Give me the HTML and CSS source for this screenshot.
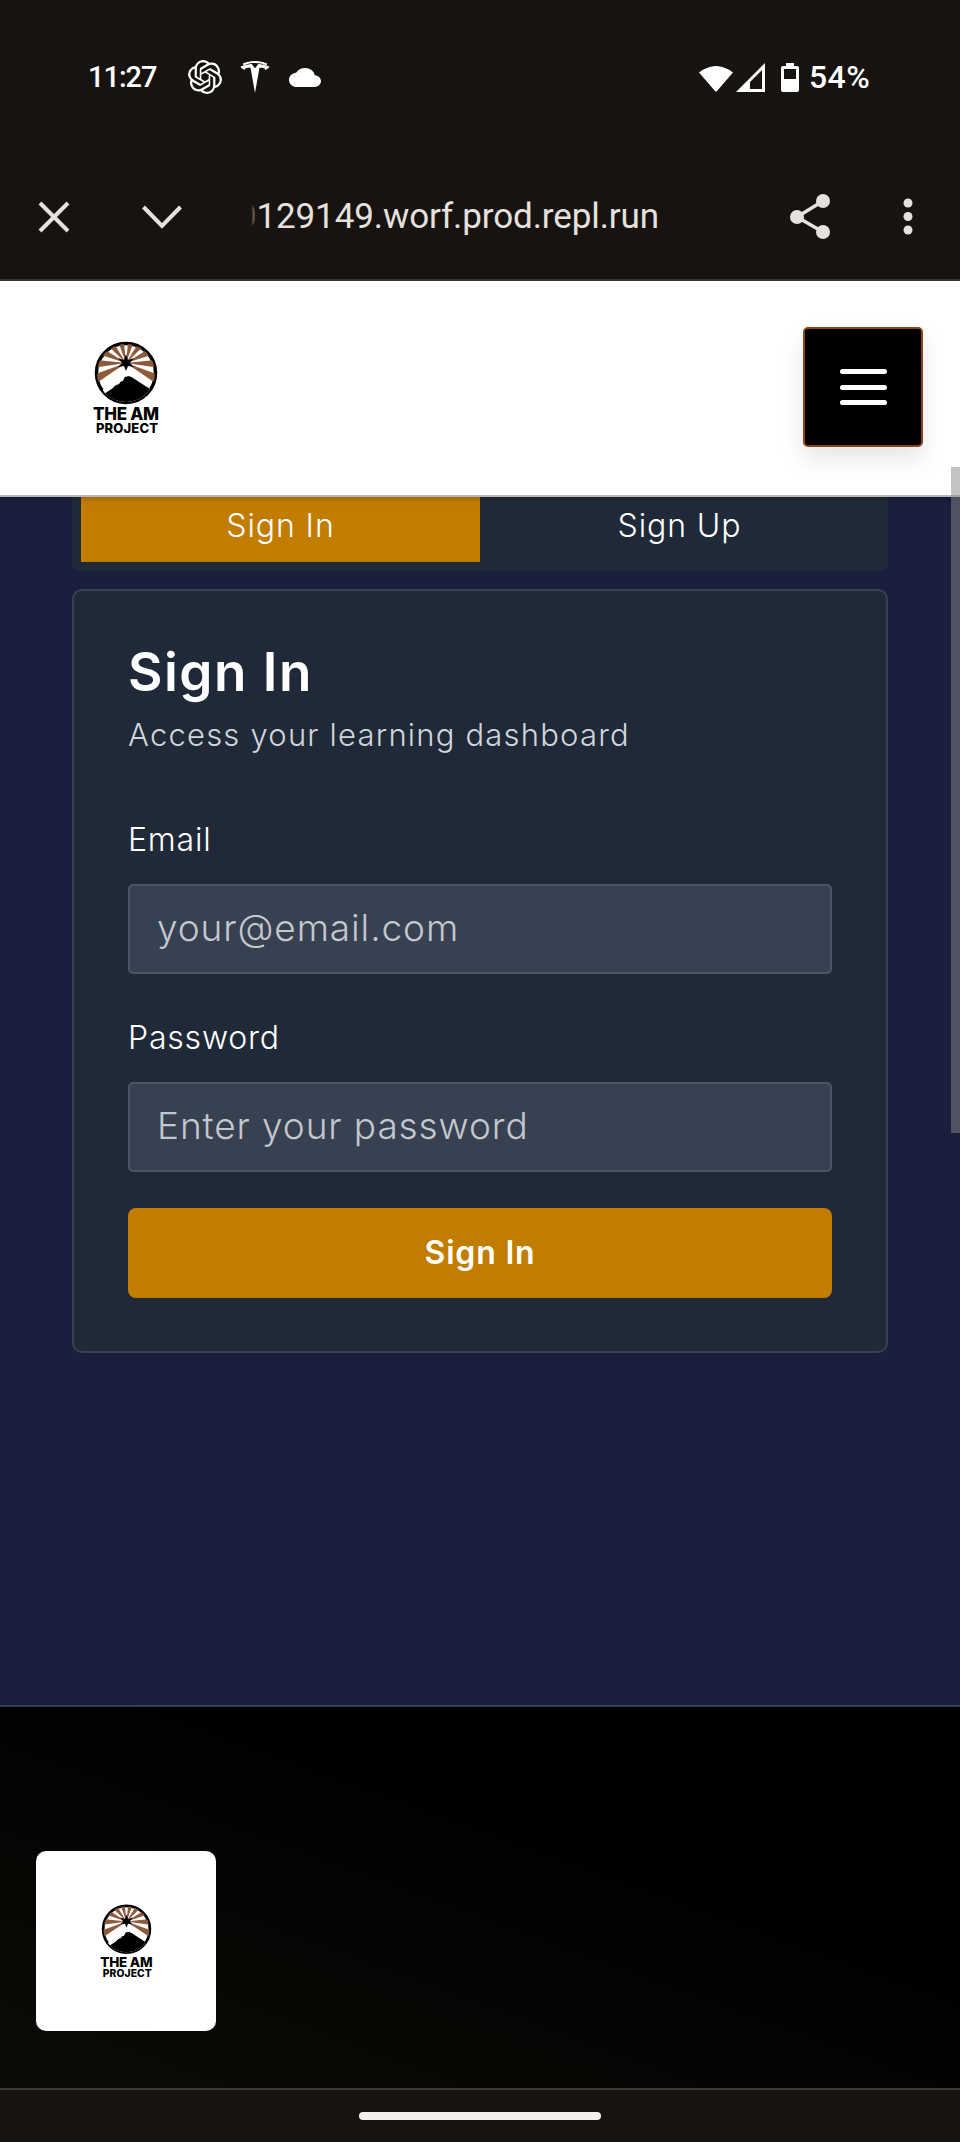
FILE: index.html
```html
<!DOCTYPE html>
<html lang="en">
<head>
<meta charset="utf-8">
<title>Sign In - The AM Project</title>
<link rel="stylesheet" href="styles.css">
</head>
<body>
<div class="page">
  <div class="status">
    <span class="time">11:27</span>
    <svg class="ic-openai" viewBox="0 0 24 24"><path fill="#fff" d="M22.2819 9.8211a5.9847 5.9847 0 0 0-.5157-4.9108 6.0462 6.0462 0 0 0-6.5098-2.9A6.0651 6.0651 0 0 0 4.9807 4.1818a5.9847 5.9847 0 0 0-3.9977 2.9 6.0462 6.0462 0 0 0 .7427 7.0966 5.98 5.98 0 0 0 .511 4.9107 6.051 6.051 0 0 0 6.5146 2.9001A5.9847 5.9847 0 0 0 13.2599 24a6.0557 6.0557 0 0 0 5.7718-4.2058 5.9894 5.9894 0 0 0 3.9977-2.9001 6.0557 6.0557 0 0 0-.7475-7.0729zm-9.022 12.6081a4.4755 4.4755 0 0 1-2.8764-1.0408l.1419-.0804 4.7783-2.7582a.7948.7948 0 0 0 .3927-.6813v-6.7369l2.02 1.1686a.071.071 0 0 1 .038.052v5.5826a4.504 4.504 0 0 1-4.4945 4.4944zm-9.6607-4.1254a4.4708 4.4708 0 0 1-.5346-3.0137l.142.0852 4.783 2.7582a.7712.7712 0 0 0 .7806 0l5.8428-3.3685v2.3324a.0804.0804 0 0 1-.0332.0615L9.74 19.9502a4.4992 4.4992 0 0 1-6.1408-1.6464zM2.3408 7.8956a4.485 4.485 0 0 1 2.3655-1.9728V11.6a.7664.7664 0 0 0 .3879.6765l5.8144 3.3543-2.0201 1.1685a.0757.0757 0 0 1-.071 0l-4.8303-2.7865A4.504 4.504 0 0 1 2.3408 7.872zm16.5963 3.8558L13.1038 8.364 15.1192 7.2a.0757.0757 0 0 1 .071 0l4.8303 2.7913a4.4944 4.4944 0 0 1-.6765 8.1042v-5.6772a.79.79 0 0 0-.407-.667zm2.0107-3.0231l-.142-.0852-4.7735-2.7818a.7759.7759 0 0 0-.7854 0L9.409 9.2297V6.8974a.0662.0662 0 0 1 .0284-.0615l4.8303-2.7866a4.4992 4.4992 0 0 1 6.6802 4.66zM8.3065 12.863l-2.02-1.1638a.0804.0804 0 0 1-.038-.0567V6.0742a4.4992 4.4992 0 0 1 7.3757-3.4537l-.142.0805L8.704 5.459a.7948.7948 0 0 0-.3927.6813zm1.0976-2.3654l2.602-1.4998 2.6069 1.4998v2.9994l-2.5974 1.4997-2.6067-1.4997Z"/></svg>
    <svg class="ic-tesla" viewBox="0 0 24 24"><path fill="#fff" d="M12 5.362l2.475-3.026s4.245.09 8.471 2.054c-1.082 1.636-3.231 2.438-3.231 2.438-.146-1.439-1.154-1.79-4.354-1.79L12 24 8.619 5.034c-3.18 0-4.188.354-4.335 1.792 0 0-2.146-.795-3.229-2.43C5.28 2.431 9.525 2.34 9.525 2.34L12 5.362l-.004.002H12v-.002zm-.002-3.899a20.3 20.3 0 0 1 8.57 1.72c.395-.713.62-1.279.62-1.279C16.5.102 12.92.013 12 .012c-.92 0-4.5.09-9.188 1.892 0 0 .209.566.62 1.28 3.114-1.358 5.87-1.695 8.565-1.72z"/></svg>
    <svg class="ic-cloud" viewBox="0 4 24 16" preserveAspectRatio="none"><path fill="#fff" d="M19.35 10.04C18.67 6.59 15.64 4 12 4 9.11 4 6.6 5.64 5.35 8.04 2.34 8.36 0 10.91 0 14c0 3.31 2.69 6 6 6h13c2.76 0 5-2.24 5-5 0-2.64-2.05-4.78-4.65-4.96z"/></svg>
    <span class="status-spacer"></span>
    <svg class="ic-wifi" viewBox="0 0 34 29"><path fill="#fff" d="M0 9.5Q17-3.5 34 9.5L18 28q-1 1.200-2 0Z"/></svg>
    <svg class="ic-signal" viewBox="0 0 29 29"><path fill="#fff" fill-rule="evenodd" d="M29 0V29H0ZM26 7 14 19V26H26Z"/></svg>
    <svg class="ic-battery" viewBox="0 0 18 29"><path fill="#fff" fill-rule="evenodd" d="M5 0h8v3h3a2 2 0 0 1 2 2v22a2 2 0 0 1-2 2H2a2 2 0 0 1-2-2V5a2 2 0 0 1 2-2h3ZM3 6v10h12V6Z"/></svg>
    <span class="percent">54%</span>
  </div>

  <div class="toolbar">
    <svg class="ic-close" viewBox="0 0 32 32"><path fill="none" stroke="#e6e1de" stroke-width="4" d="M2 2 30 30M30 2 2 30"/></svg>
    <svg class="ic-chevron" viewBox="0 0 40 24"><path fill="none" stroke="#e6e1de" stroke-width="4" d="M1.500 2 20 21 38.500 2"/></svg>
    <div class="url"><span class="url-text">0129149.worf.prod.repl.run</span></div>
    <svg class="ic-share" viewBox="0 0 40 45"><g fill="#e6e1de"><circle cx="7" cy="23" r="7"/><circle cx="33" cy="7" r="7"/><circle cx="33" cy="38" r="7"/></g><path fill="none" stroke="#e6e1de" stroke-width="3.500" d="M33 7 7 23 33 38"/></svg>
    <svg class="ic-dots" viewBox="0 0 10 37"><g fill="#e6e1de"><circle cx="5" cy="5" r="4.500"/><circle cx="5" cy="18.500" r="4.500"/><circle cx="5" cy="32" r="4.500"/></g></svg>
  </div>

  <header class="site-header">
    <svg class="logo logo-large" viewBox="0 0 72 94">
      <defs><clipPath id="disc"><circle cx="36" cy="32" r="29"/></clipPath></defs>
      <circle cx="36" cy="32" r="29.500" fill="#fff" stroke="#000" stroke-width="3.500"/>
      <g clip-path="url(#disc)">
        <g fill="#8e5a3c">
          <path d="M36 22 29.500-30H42.500Z" transform="rotate(-13 36 22)"/>
          <path d="M36 22 29.500-30H42.500Z" transform="rotate(13 36 22)"/>
          <path d="M36 22 29.500-30H42.500Z" transform="rotate(-39 36 22)"/>
          <path d="M36 22 29.500-30H42.500Z" transform="rotate(39 36 22)"/>
          <path d="M36 22 29.500-30H42.500Z" transform="rotate(-65 36 22)"/>
          <path d="M36 22 29.500-30H42.500Z" transform="rotate(65 36 22)"/>
          <path d="M36 22 29.500-30H42.500Z" transform="rotate(-91 36 22)"/>
          <path d="M36 22 29.500-30H42.500Z" transform="rotate(91 36 22)"/>
          <path d="M36 22 29.500-30H42.500Z" transform="rotate(-117 36 22)"/>
          <path d="M36 22 29.500-30H42.500Z" transform="rotate(117 36 22)"/>
        </g>
        <path fill="#fff" d="M35 25 50 38 62 50 50 62H20L12 50 22 38Z"/>
        <path fill="#000" d="M34 36 40 35 66 52 50 70H20L4 58 14 52 24 45 29 43Z"/>
        <path fill="#fff" d="M35 28 46 36 41 36 36 33 33 40 28 41 23 47 14 53 13 50 25 38Z"/>
      </g>
      <path fill="#000" d="M36 13 38 19 44 17 40 22 44 26 38 25 36 30 34 25 28 26 32 22 28 17 34 19Z"/>
      <text class="logo-top" x="36" y="79" text-anchor="middle" textLength="66">THE AM</text>
      <text class="logo-bottom" x="37" y="92" text-anchor="middle" textLength="62">PROJECT</text>
    </svg>
    <button class="menu-btn" type="button" aria-label="Menu"><span></span><span></span><span></span></button>
  </header>

  <main class="main">
    <div class="tabs">
      <button class="tab tab-active" type="button">Sign In</button>
      <button class="tab" type="button">Sign Up</button>
    </div>
    <section class="card">
      <h1 class="card-title">Sign In</h1>
      <p class="card-sub">Access your learning dashboard</p>
      <form class="form">
        <label class="label label-email" for="email">Email</label>
        <input class="input" id="email" type="email" placeholder="your@email.com">
        <label class="label label-pass" for="password">Password</label>
        <input class="input" id="password" type="password" placeholder="Enter your password">
        <button class="submit" type="button">Sign In</button>
      </form>
    </section>
  </main>

  <footer class="footer">
    <div class="footer-logo">
      <svg class="logo logo-small" viewBox="0 0 72 94">
        <circle cx="36" cy="32" r="29.500" fill="#fff" stroke="#000" stroke-width="3.500"/>
        <g clip-path="url(#disc)">
          <g fill="#8e5a3c">
            <path d="M36 22 29.500-30H42.500Z" transform="rotate(-13 36 22)"/>
            <path d="M36 22 29.500-30H42.500Z" transform="rotate(13 36 22)"/>
            <path d="M36 22 29.500-30H42.500Z" transform="rotate(-39 36 22)"/>
            <path d="M36 22 29.500-30H42.500Z" transform="rotate(39 36 22)"/>
            <path d="M36 22 29.500-30H42.500Z" transform="rotate(-65 36 22)"/>
            <path d="M36 22 29.500-30H42.500Z" transform="rotate(65 36 22)"/>
            <path d="M36 22 29.500-30H42.500Z" transform="rotate(-91 36 22)"/>
            <path d="M36 22 29.500-30H42.500Z" transform="rotate(91 36 22)"/>
            <path d="M36 22 29.500-30H42.500Z" transform="rotate(-117 36 22)"/>
            <path d="M36 22 29.500-30H42.500Z" transform="rotate(117 36 22)"/>
          </g>
          <path fill="#fff" d="M35 25 50 38 62 50 50 62H20L12 50 22 38Z"/>
          <path fill="#000" d="M34 36 40 35 66 52 50 70H20L4 58 14 52 24 45 29 43Z"/>
          <path fill="#fff" d="M35 28 46 36 41 36 36 33 33 40 28 41 23 47 14 53 13 50 25 38Z"/>
        </g>
        <path fill="#000" d="M36 13 38 19 44 17 40 22 44 26 38 25 36 30 34 25 28 26 32 22 28 17 34 19Z"/>
        <text class="logo-top" x="36" y="79" text-anchor="middle" textLength="66">THE AM</text>
        <text class="logo-bottom" x="37" y="92" text-anchor="middle" textLength="62">PROJECT</text>
      </svg>
    </div>
  </footer>

  <div class="navbar"><span class="home-pill"></span></div>

  <div class="scrollbar"></div>
</div>
</body>
</html>
```
FILE: styles.css
```css
* { box-sizing: border-box; }
html, body { margin: 0; padding: 0; }
body { font-family: "Inter", "Liberation Sans", sans-serif; background: #1a1f3d; }

.page {
  position: relative;
  width: 960px;
  height: 2142px;
  display: flex;
  flex-direction: column;
  overflow: hidden;
}

/* Android status bar */
.status {
  height: 154px;
  background: #161310;
  color: #fff;
  display: flex;
  align-items: center;
  padding: 0 89px 0 88px;
  font-family: "Roboto", sans-serif;
  font-weight: 500;
}
.time { font-size: 29px; letter-spacing: -1px; width: 66px; margin-right: 34px; white-space: nowrap; }
.ic-openai { width: 34px; height: 34px; margin-right: 17px; }
.ic-tesla { width: 32px; height: 32px; margin-right: 18px; }
.ic-cloud { width: 32px; height: 19px; }
.status-spacer { flex: 1; }
.ic-wifi { width: 34px; height: 29px; margin-right: 3px; }
.ic-signal { width: 29px; height: 29px; margin-right: 16px; }
.ic-battery { width: 18px; height: 29px; margin-right: 10px; }
.percent { font-size: 32px; font-weight: 500; letter-spacing: 0.4px; width: 62px; white-space: nowrap; }

/* Browser toolbar */
.toolbar {
  height: 127px;
  background: #161310;
  border-bottom: 2px solid #3b3a38;
  display: flex;
  align-items: center;
  padding: 0 47px 0 38px;
}
.ic-close { width: 32px; height: 32px; margin-right: 72px; }
.ic-chevron { width: 40px; height: 24px; margin-right: 61px; }
.url {
  position: relative;
  width: 416px;
  overflow: hidden;
  display: flex;
  justify-content: flex-end;
  color: #e6e1de;
  font-family: "Roboto", sans-serif;
  font-weight: 400;
  font-size: 35px;
  line-height: 44px;
  letter-spacing: -0.1px;
  white-space: nowrap;
}
.url::before {
  content: "";
  position: absolute;
  left: 0;
  top: 0;
  bottom: 0;
  width: 15px;
  background: linear-gradient(90deg, #161310 55%, rgba(22, 19, 16, 0));
}
.ic-share { width: 40px; height: 45px; margin-left: auto; margin-right: 73px; }
.ic-dots { width: 10px; height: 37px; }

/* Site header */
.site-header {
  position: relative;
  z-index: 2;
  height: 216px;
  background: #fff;
  border-bottom: 2px solid #b8b8b8;
  box-shadow: 0 2px 6px rgba(0, 0, 0, 0.18);
  display: flex;
  align-items: center;
  justify-content: space-between;
  padding: 0 37px 2px 90px;
}
.logo { width: 72px; height: 94px; display: block; }
.logo-large { margin-top: 2px; }
.logo-small { width: 57px; height: 74.400px; }
.logo-top { font-family: "Inter", sans-serif; font-weight: 800; font-size: 17px; fill: #000; }
.logo-bottom { font-family: "Inter", sans-serif; font-weight: 800; font-size: 13px; fill: #000; }
.menu-btn {
  width: 120px;
  height: 120px;
  padding: 0;
  background: #000;
  border: 2px solid #8b4513;
  border-radius: 5px;
  box-shadow: 0 12px 24px rgba(0, 0, 0, 0.1);
  display: flex;
  flex-direction: column;
  align-items: center;
  justify-content: center;
  gap: 10.500px;
}
.menu-btn span { width: 47px; height: 5px; border-radius: 3px; background: #fff; }

/* Main */
.main {
  flex: 1;
  background: #1a1f3d;
  padding: 0 72px;
}
.tabs {
  display: flex;
  padding: 0 9px 9px;
  background: #1f2937;
  border-radius: 0 0 5px 5px;
}
.tab {
  flex: 1;
  height: 65px;
  padding: 0 0 8px;
  border: 0;
  background: transparent;
  color: #fff;
  font-family: inherit;
  font-size: 32px;
  font-weight: 350;
  letter-spacing: 0.9px;
}
.tab-active { background: #c27c00; }
.card {
  margin-top: 18px;
  height: 764px;
  padding: 49px 54px 0;
  background: #1f2937;
  border: 2px solid #374151;
  border-radius: 10px;
}
.card-title {
  margin: 0;
  color: #fff;
  font-size: 53px;
  line-height: 64px;
  font-weight: 600;
  letter-spacing: 1.5px;
}
.card-sub {
  margin: 9px 0 0;
  color: #d1d5db;
  font-size: 31px;
  line-height: 44px;
  font-weight: 350;
  letter-spacing: 1.2px;
}
.form { display: flex; flex-direction: column; }
.label {
  color: #fff;
  font-size: 32px;
  line-height: 44px;
  font-weight: 350;
  letter-spacing: 0.8px;
}
.label-email { margin-top: 61px; margin-bottom: 22px; }
.label-pass { margin-top: 42px; margin-bottom: 22px; }
.input {
  width: 100%;
  height: 90px;
  padding: 0 27px 3px;
  background: #374151;
  border: 2px solid #4b5563;
  border-radius: 5px;
  color: #fff;
  font-family: inherit;
  font-size: 37px;
  font-weight: 350;
  letter-spacing: 0.9px;
}
.input::placeholder { color: #c3c7ce; opacity: 1; }
.submit {
  margin-top: 36px;
  height: 90px;
  padding: 0 0 2px;
  border: 0;
  border-radius: 8px;
  background: #c27c00;
  color: #fff;
  font-family: inherit;
  font-size: 32px;
  font-weight: 600;
  letter-spacing: 0.8px;
}

/* Footer */
.footer {
  height: 383px;
  border-top: 2px solid #3b3c4a;
  background: linear-gradient(20deg, #0c0b07, #000 65%);
  display: flex;
  align-items: flex-end;
  padding: 0 0 57px 36px;
}
.footer-logo {
  width: 180px;
  height: 180px;
  background: #fff;
  border-radius: 10px;
  display: flex;
  align-items: center;
  justify-content: center;
}

/* Android nav bar */
.navbar {
  height: 54px;
  background: #161310;
  border-top: 2px solid #3b3a38;
  display: flex;
  justify-content: center;
  padding-top: 22px;
}
.home-pill { width: 242px; height: 8px; border-radius: 4px; background: #f2efec; }

/* Overlay scrollbar */
.scrollbar {
  position: absolute;
  z-index: 3;
  top: 467px;
  right: 0;
  width: 9px;
  height: 666px;
  background: rgba(136, 136, 136, 0.5);
}
```
